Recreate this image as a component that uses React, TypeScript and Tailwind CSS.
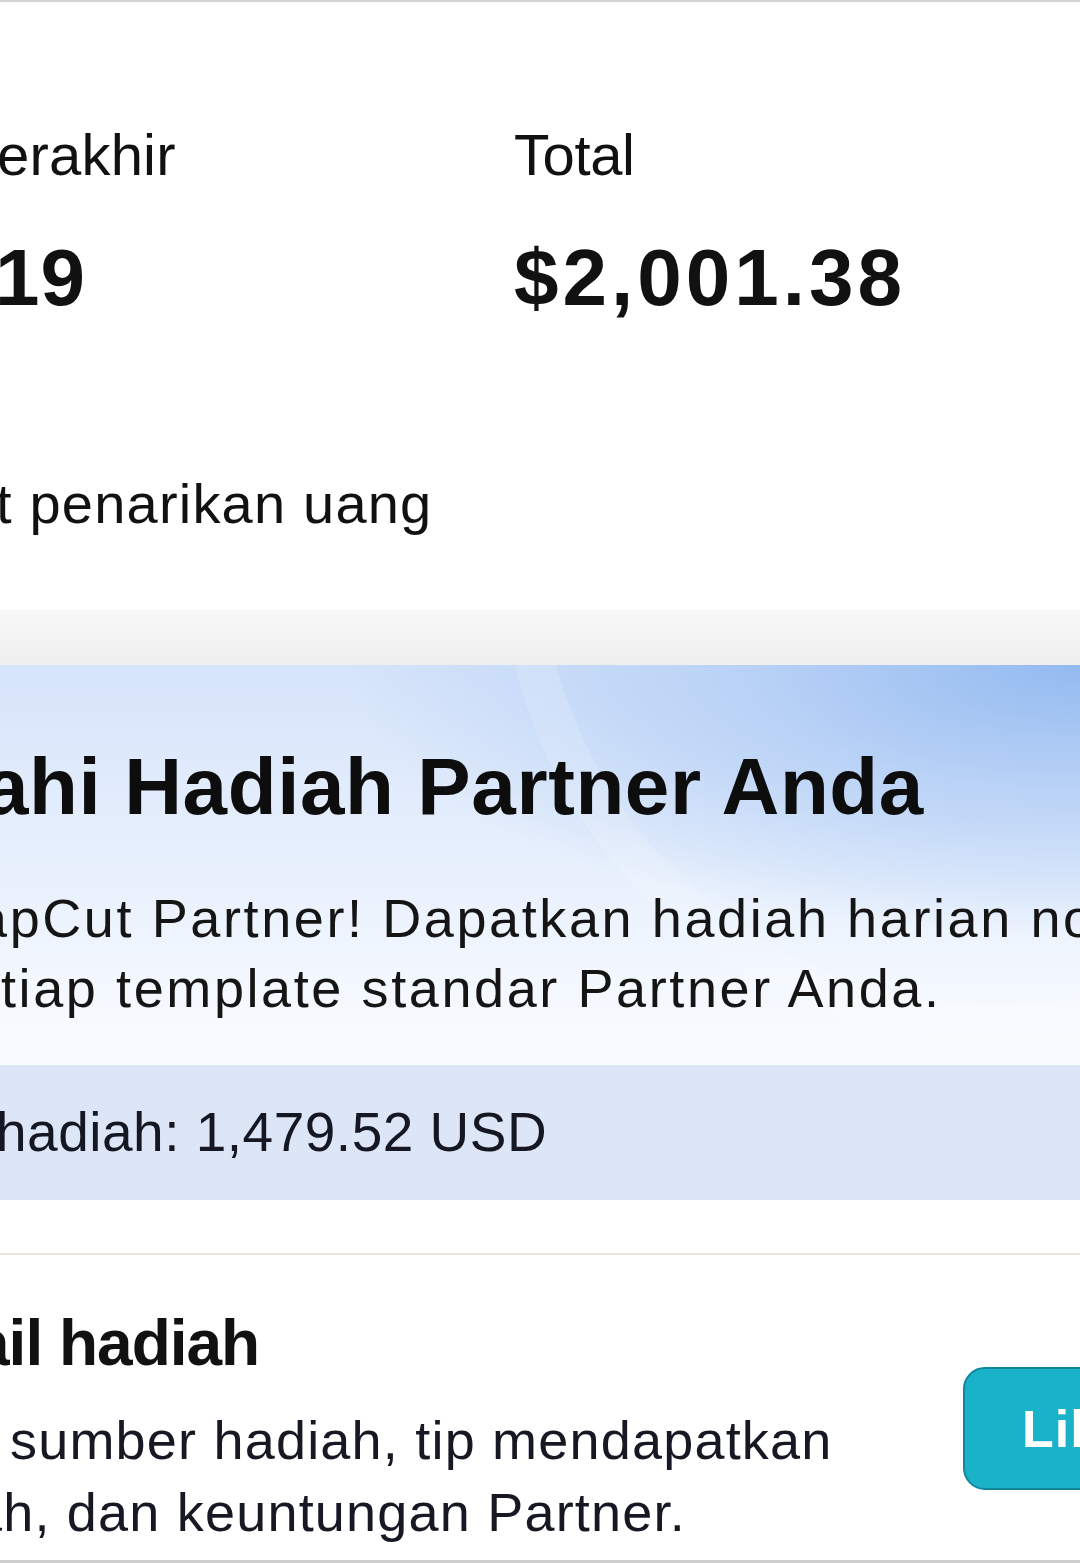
import React from "react";

const font = { fontFamily: '"Liberation Sans", Arial, sans-serif' };

const StatColumn = ({
  label,
  value,
  labelClass,
  valueClass,
  className,
}: {
  label: string;
  value: string;
  labelClass?: string;
  valueClass?: string;
  className?: string;
}) => (
  <div className={className}>
    <div className={`text-[58px] leading-none text-[#111] ${labelClass ?? ""}`}>{label}</div>
    <div className={`mt-[54px] text-[80px] font-bold leading-none text-[#111] ${valueClass ?? ""}`}>
      {value}
    </div>
  </div>
);

const App = () => {
  return (
    <div
      className="w-[1080px] h-[1563px] overflow-hidden bg-white text-[#111] whitespace-nowrap"
      style={font}
    >
      {/* top hairline */}
      <div className="h-[2px] bg-[#d2d2d2]" />

      {/* earnings summary */}
      <section className="h-[608px] pt-[124px]">
        <div className="flex">
          <StatColumn
            label="erakhir"
            value="19"
            className="w-[514px] -ml-[3px] shrink-0"
            labelClass="tracking-[0.2px]"
            valueClass="-ml-[2px] tracking-[1px]"
          />
          <StatColumn
            label="Total"
            value="$2,001.38"
            className="ml-[3px]"
            labelClass="tracking-[-0.4px]"
            valueClass="tracking-[4px]"
          />
        </div>
        <div className="mt-[158px] -ml-[4px] text-[56px] leading-none tracking-[1.2px]">
          t penarikan uang
        </div>
      </section>

      {/* divider band */}
      <div className="h-[55px] bg-gradient-to-b from-[#f8f8f8] to-[#efefef]" />

      {/* partner banner */}
      <section className="relative h-[400px] overflow-hidden bg-[radial-gradient(ellipse_at_100%_0%,#93baf0_0%,#b9d2f6_22%,transparent_48%),linear-gradient(180deg,#d6e4fa_0%,#e9f1fd_55%,#f8fbff_92%)] pt-[82px]">
        <div className="pointer-events-none absolute -right-[420px] -top-[620px] h-[1000px] w-[1000px] rounded-full border-[40px] border-white/15" />
        <h2 className="relative -ml-[16px] text-[80px] font-bold leading-none tracking-[0.6px] text-[#0d0d0d]">
          ahi Hadiah Partner Anda
        </h2>
        <div className="relative mt-[56px] text-[54px] leading-[70px] tracking-[2.6px] text-[#151515]">
          <p className="-ml-[23px]">apCut Partner! Dapatkan hadiah harian non-eksklusif</p>
          <p className="ml-[1px]">tiap template standar Partner Anda.</p>
        </div>
      </section>

      {/* reward total band */}
      <div className="flex h-[135px] items-center bg-[#dde6f7]">
        <span className="-ml-[4px] text-[55px] leading-none tracking-[0.5px] text-[#151823]">
          hadiah: 1,479.52 USD
        </span>
      </div>

      <div className="h-[53px]" />
      <div className="h-[2px] bg-[#efe4de]" />

      {/* reward details */}
      <section className="flex h-[305px] items-start">
        <div className="w-[963px] shrink-0 pt-[56px]">
          <h3 className="-ml-[26px] text-[64px] font-bold leading-none tracking-[-1px] text-[#111]">
            ail hadiah
          </h3>
          <div className="mt-[29px] text-[54px] leading-[72px] tracking-[1.2px] text-[#161823]">
            <p className="ml-[10px]">sumber hadiah, tip mendapatkan</p>
            <p className="-ml-[28px]">ah, dan keuntungan Partner.</p>
          </div>
        </div>
        <button className="mt-[112px] h-[123px] w-[220px] shrink-0 rounded-[22px] border-2 border-[#11879b] bg-[#1ab2c8] pl-[57px] text-left text-[52px] font-bold leading-none tracking-[1px] text-white">
          Lihat
        </button>
      </section>

      <div className="h-[3px] bg-[#cfcfcf]" />
    </div>
  );
};

export default App;
